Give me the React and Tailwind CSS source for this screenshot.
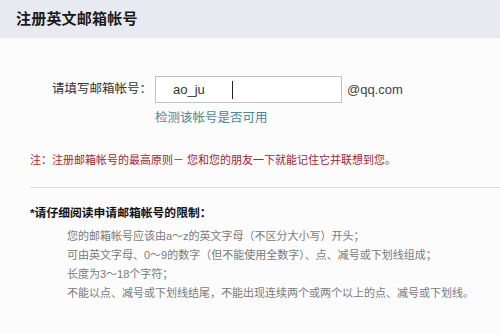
const font = { fontFamily: '"Liberation Sans", "Noto Sans CJK SC", sans-serif' };

const rules = [
  "您的邮箱帐号应该由a～z的英文字母（不区分大小写）开头；",
  "可由英文字母、0～9的数字（但不能使用全数字）、点、减号或下划线组成；",
  "长度为3～18个字符；",
  "不能以点、减号或下划线结尾，不能出现连续两个或两个以上的点、减号或下划线。",
];

const App = () => {
  return (
    <div className="w-[500px] h-[334px] bg-[#fcfcfd] overflow-hidden" style={font}>
      <div className="h-[38px] bg-[#e7eaf0] flex items-center pl-4">
        <h2 className="text-[15px] font-bold text-[#1a1a1a] tracking-[0.2px]">注册英文邮箱帐号</h2>
      </div>

      <div className="pl-[52px] pt-[38px]">
        <div className="flex items-center">
          <span className="text-[12.5px] text-[#333] w-[103px]">请填写邮箱帐号：</span>
          <div className="w-[187px] h-[27px] border border-[#bfc3c8] bg-white flex items-center pl-[17px]">
            <span className="text-[13px] text-[#333] w-[59px]">ao_ju</span>
            <span className="w-px h-[18px] bg-[#222]"></span>
          </div>
          <span className="text-[13px] text-[#444] ml-[5px]">@qq.com</span>
        </div>
        <p className="ml-[103px] mt-[6px] text-[12.5px] text-[#4e8795]">检测该帐号是否可用</p>
      </div>

      <div className="pl-[30px]">
        <p className="mt-[24px] text-[11px] text-[#a3262c]">注：注册邮箱帐号的最高原则－ 您和您的朋友一下就能记住它并联想到您。</p>
        <div className="mt-[19px] h-px bg-[#dcdcdc]"></div>
        <p className="mt-[17px] text-[11.8px] font-bold text-[#111]">*请仔细阅读申请邮箱帐号的限制：</p>
        <ul className="mt-[4px] pl-[37px]">
          {rules.map((r) => (
            <li key={r} className="text-[11px] leading-[19px] text-[#7a7a7a]">{r}</li>
          ))}
        </ul>
      </div>
    </div>
  );
};

export default App;
